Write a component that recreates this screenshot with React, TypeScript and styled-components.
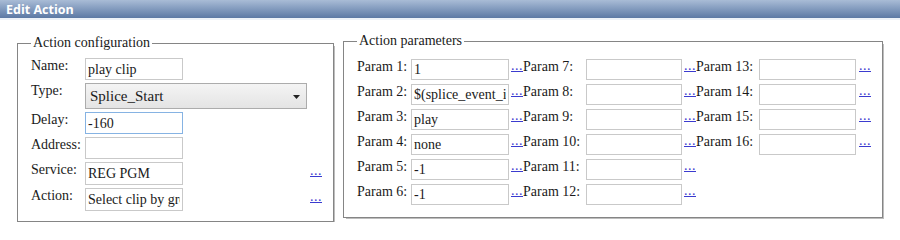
import { Fragment } from "react";
import styled, { createGlobalStyle } from "styled-components";

const GlobalStyle = createGlobalStyle`
  body {
    margin: 0;
    background: #ffffff;
    font-family: "Liberation Serif", "Times New Roman", serif;
    color: #1a1a1a;
  }
`;

const TitleBar = styled.div`
  height: 18px;
  padding-left: 6px;
  display: flex;
  align-items: center;
  background: linear-gradient(#a9bcd6, #7e97bb 55%, #5c79a4);
  border-bottom: 2px solid #edf2f8;
  color: #ffffff;
  font-family: "Open Sans", "Liberation Sans", sans-serif;
  font-weight: 700;
  font-size: 12.5px;
`;

const Content = styled.div`
  display: flex;
  align-items: flex-start;
  gap: 9px;
  padding: 13px 0 0 17px;
`;

const Fieldset = styled.fieldset<{ $top: number; $bottom: number }>`
  margin: ${(p) => p.$top}px 0 0 0;
  padding: 0 11px ${(p) => p.$bottom}px 13px;
  min-inline-size: 0;
  border: 1px solid #858585;
  box-shadow: 2px 2px 0 -1px #bdbdbd;
`;

const Legend = styled.legend`
  padding: 0 2px;
  font-size: 14px;
  line-height: 16px;
`;

const ConfigGrid = styled.div`
  display: grid;
  grid-template-columns: 54px 98px 126px 13px;
  grid-template-rows: 22px 26px 22px 22px 23px 23px;
  row-gap: 3px;
  margin-top: 7px;
`;

const ParamsGrid = styled.div`
  display: grid;
  grid-template-columns: 54px 98px 14px 63px 96px 14px 63px 97px 15px;
  grid-auto-rows: 21px;
  row-gap: 4px;
  margin-top: 10px;
`;

const Label = styled.span`
  align-self: start;
  margin-top: 0;
  font-size: 14px;
  line-height: 16px;
  white-space: nowrap;
`;

const TextBox = styled.input<{ $focused?: boolean }>`
  box-sizing: border-box;
  width: 100%;
  height: 100%;
  margin: 0;
  padding: 1px 2px 0;
  border: 1px solid ${(p) => (p.$focused ? "#86b3e3" : "#c9c9c9")};
  background: #ffffff;
  font-family: "Liberation Serif", "Times New Roman", serif;
  font-size: 14px;
  color: #1a1a1a;
  outline: none;
`;

const SelectBox = styled.div`
  grid-column: 2 / span 2;
  box-sizing: border-box;
  width: 222px;
  height: 100%;
  display: flex;
  align-items: center;
  justify-content: space-between;
  padding: 1px 6px 0 4px;
  border: 1px solid #acacac;
  background: linear-gradient(#f4f4f4, #e4e4e4);
  font-size: 15px;
`;

const MoreLink = styled.a<{ $indent: number }>`
  align-self: end;
  margin: 0 0 6px ${(p) => p.$indent}px;
  font-size: 14px;
  line-height: 16px;
  letter-spacing: 0.5px;
  color: #3b3bcf;
  text-decoration: underline;
  cursor: pointer;
`;

const Blank = styled.span``;

const configRows = [
  { label: "Name:", value: "play clip" },
  { label: "Type:", select: "Splice_Start" },
  { label: "Delay:", value: "-160", focused: true },
  { label: "Address:", value: "" },
  { label: "Service:", value: "REG PGM", more: true },
  { label: "Action:", value: "Select clip by group", more: true },
];

const paramValues: Record<number, string> = {
  1: "1",
  2: "$(splice_event_id)",
  3: "play",
  4: "none",
  5: "-1",
  6: "-1",
};

const paramRows = [0, 1, 2, 3, 4, 5].map((i) => [i + 1, i + 7, i < 4 ? i + 13 : null]);

const ParamCells = ({ n, col }: { n: number | null; col: number }) => {
  if (n === null) {
    return (
      <>
        <Blank />
        <Blank />
        <Blank />
      </>
    );
  }
  return (
    <>
      <Label>Param {n}:</Label>
      <TextBox readOnly defaultValue={paramValues[n] ?? ""} />
      <MoreLink $indent={col === 2 ? 3 : 2}>...</MoreLink>
    </>
  );
};

const App = () => {
  return (
    <>
      <GlobalStyle />
      <TitleBar>Edit Action</TitleBar>
      <Content>
        <Fieldset $top={2} $bottom={10}>
          <Legend>Action configuration</Legend>
          <ConfigGrid>
            {configRows.map((row) => (
              <Fragment key={row.label}>
                <Label>{row.label}</Label>
                {row.select ? (
                  <SelectBox>
                    <span>{row.select}</span>
                    <svg width="7" height="4" viewBox="0 0 7 4">
                      <path d="M0 0H7L3.5 4Z" fill="#222" />
                    </svg>
                  </SelectBox>
                ) : (
                  <>
                    <TextBox readOnly defaultValue={row.value} $focused={row.focused} />
                    <Blank />
                  </>
                )}
                {row.more ? <MoreLink $indent={1}>...</MoreLink> : <Blank />}
              </Fragment>
            ))}
          </ConfigGrid>
        </Fieldset>
        <Fieldset $top={0} $bottom={12}>
          <Legend>Action parameters</Legend>
          <ParamsGrid>
            {paramRows.map((cols) =>
              cols.map((n, c) => <ParamCells key={`${cols[0]}-${c}`} n={n} col={c} />)
            )}
          </ParamsGrid>
        </Fieldset>
      </Content>
    </>
  );
};

export default App;
